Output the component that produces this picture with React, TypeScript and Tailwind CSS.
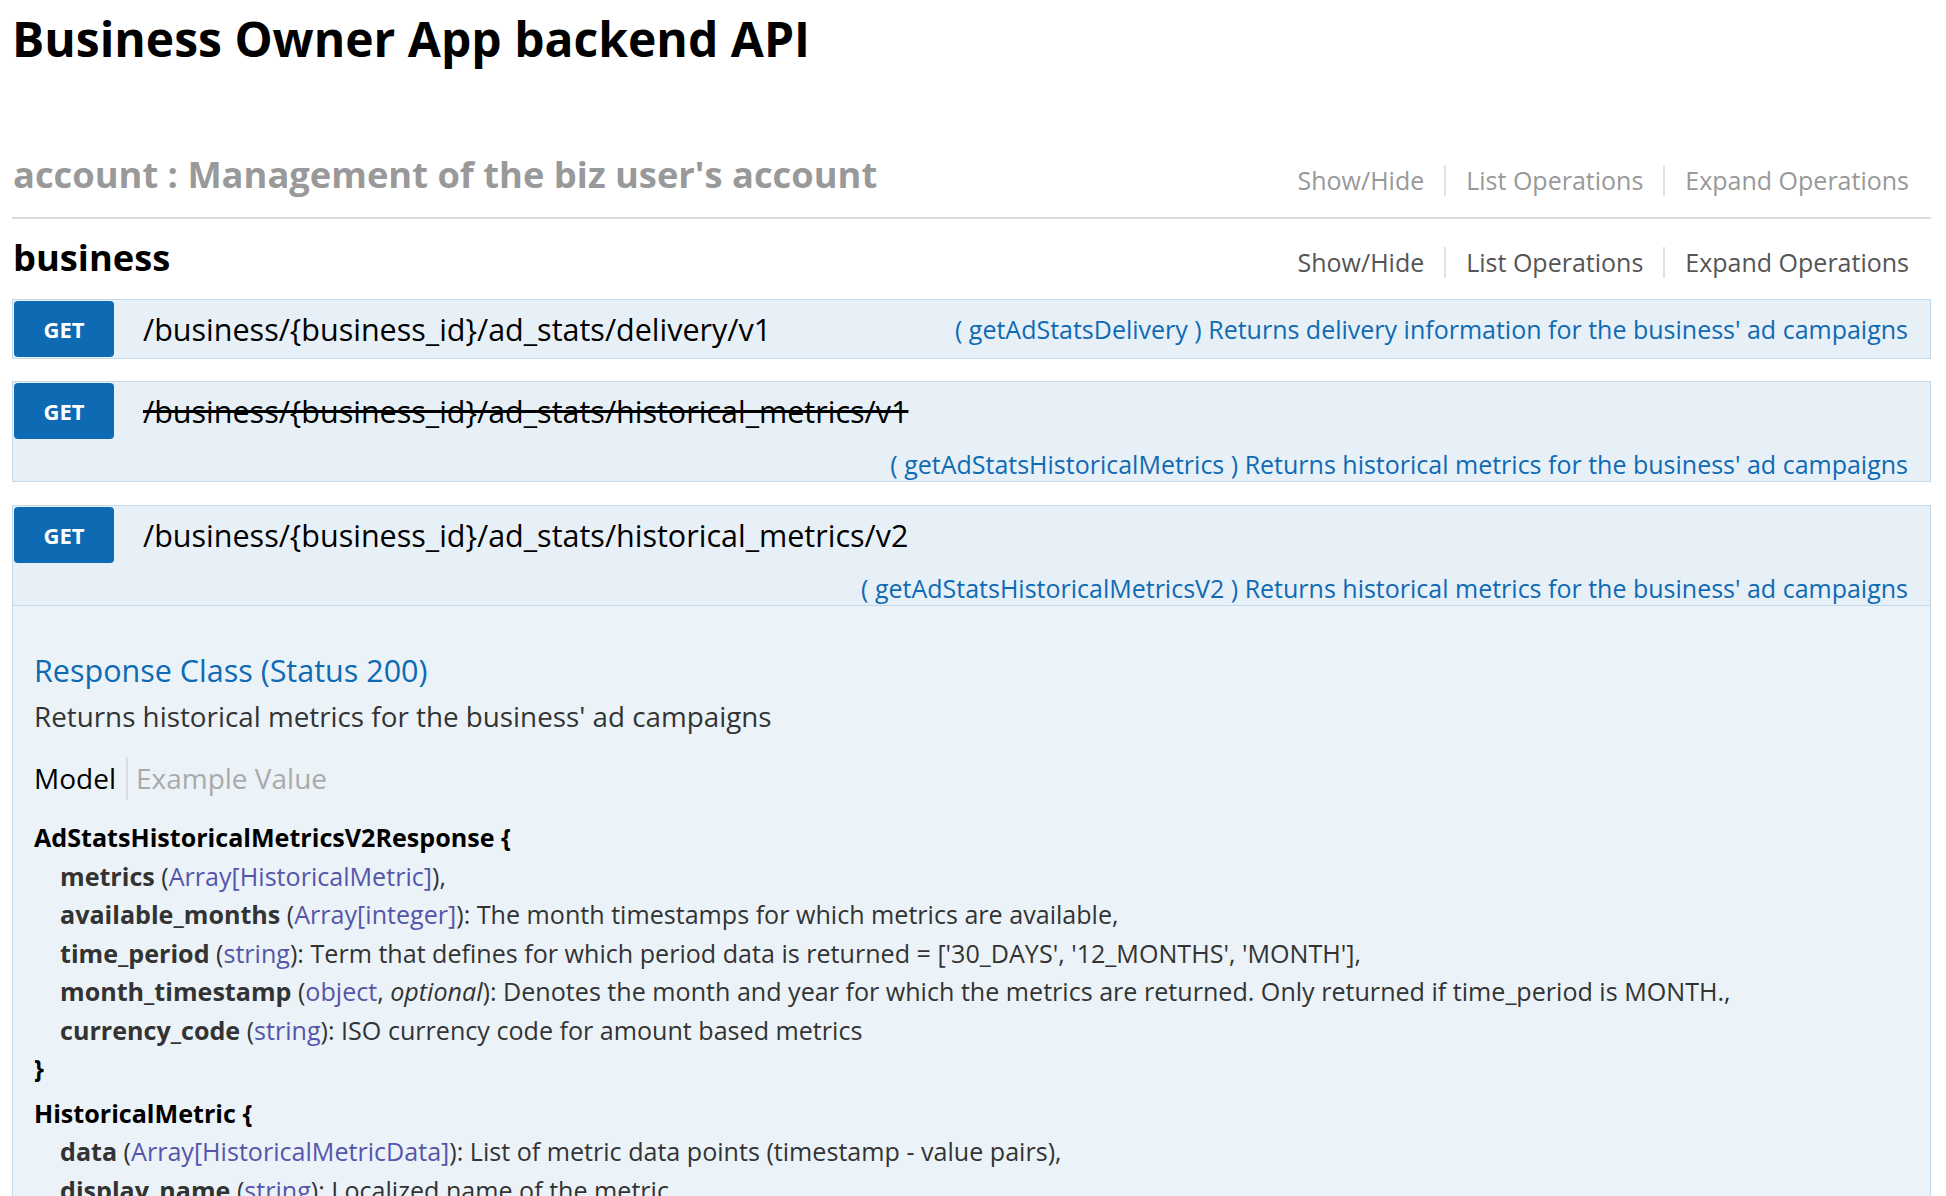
import React from "react";

const Links = ({ color }: { color: string }) => (
  <ul className={`flex items-center text-[25px] ${color}`}>
    <li className="px-[20px] leading-[31px]">Show/Hide</li>
    <li className="px-[20px] leading-[31px] border-l-2 border-[#e2e2e2]">List Operations</li>
    <li className="pl-[20px] leading-[31px] border-l-2 border-[#e2e2e2]">Expand Operations</li>
  </ul>
);

const Badge = () => (
  <div className="w-[100px] h-[56px] rounded-[4px] bg-[#0f6ab4] text-white font-bold text-[22px] flex items-center justify-center">
    GET
  </div>
);

const T = ({ children }: { children: React.ReactNode }) => (
  <span className="text-[#55a]">{children}</span>
);
const P = ({ children }: { children: React.ReactNode }) => (
  <span className="font-bold text-[#333]">{children}</span>
);

export default function App() {
  return (
    <div className="h-[1196px] overflow-hidden bg-white font-['Open_Sans',sans-serif] text-black">
      <div className="pl-[12px] pr-[15px]">
        <h1 className="pt-[7px] text-[48px] leading-[64px] font-bold">Business Owner App backend API</h1>

        {/* account resource */}
        <div className="mt-[78px] flex justify-between items-start pb-[18px] border-b-2 border-[#ddd]">
          <h2 className="pl-[1px] text-[36.3px] leading-[50px] font-bold text-[#999]">
            account : Management of the biz user's account
          </h2>
          <div className="mt-[16px] pr-[22px]">
            <Links color="text-[#999]" />
          </div>
        </div>

        {/* business resource */}
        <div className="mt-[13px] flex justify-between items-start">
          <h2 className="pl-[1px] text-[36.3px] leading-[50px] font-bold">business</h2>
          <div className="mt-[15px] pr-[22px]">
            <Links color="text-[#555]" />
          </div>
        </div>

        {/* op 1 */}
        <div className="mt-[17px] border border-[#c3d9ec] bg-[#e7f0f7]">
          <div className="flex items-center p-[1px] pr-[22px]">
            <Badge />
            <div className="ml-[29px] text-[30.5px] leading-[40px]">/business/&#123;business_id&#125;/ad_stats/delivery/v1</div>
            <div className="ml-auto text-[25px] leading-[40px] text-[#0f6ab4]">
              ( getAdStatsDelivery ) Returns delivery information for the business' ad campaigns
            </div>
          </div>
        </div>

        {/* op 2 */}
        <div className="mt-[22px] border border-[#c3d9ec] bg-[#e7f0f7]">
          <div className="flex items-center p-[1px]">
            <Badge />
            <div className="ml-[29px] text-[30.5px] leading-[40px] line-through">
              /business/&#123;business_id&#125;/ad_stats/historical_metrics/v1
            </div>
          </div>
          <div className="pt-[7px] pr-[22px] text-right text-[25px] leading-[34px] text-[#0f6ab4]">
            ( getAdStatsHistoricalMetrics ) Returns historical metrics for the business' ad campaigns
          </div>
        </div>

        {/* op 3 */}
        <div className="mt-[23px] border border-[#c3d9ec] bg-[#ebf3f9]">
          <div className="bg-[#e7f0f7] border-b border-[#c3d9ec]">
            <div className="flex items-center p-[1px]">
              <Badge />
              <div className="ml-[29px] text-[30.5px] leading-[40px]">
                /business/&#123;business_id&#125;/ad_stats/historical_metrics/v2
              </div>
            </div>
            <div className="pt-[7px] pr-[22px] text-right text-[25px] leading-[34px] text-[#0f6ab4]">
              ( getAdStatsHistoricalMetricsV2 ) Returns historical metrics for the business' ad campaigns
            </div>
          </div>

          <div className="pl-[21px] pr-[22px] pt-[44px] pb-[40px]">
            <h4 className="text-[30.5px] leading-[40px] text-[#0f6ab4]">Response Class (Status 200)</h4>
            <p className="mt-[7px] text-[27.8px] leading-[38px] text-[#333]">
              Returns historical metrics for the business' ad campaigns
            </p>
            <div className="mt-[22px] flex items-center text-[28px] leading-[43px]">
              <span className="pr-[10px] text-black">Model</span>
              <span className="pl-[8px] border-l-2 border-[#ddd] text-[#aaa]">Example Value</span>
            </div>

            <div className="mt-[18px] text-[25.1px] leading-[38.5px] text-[#333]">
              <div className="font-bold text-black">AdStatsHistoricalMetricsV2Response &#123;</div>
              <div className="pl-[26px]">
                <div><P>metrics</P> (<T>Array[HistoricalMetric]</T>),</div>
                <div><P>available_months</P> (<T>Array[integer]</T>): The month timestamps for which metrics are available,</div>
                <div><P>time_period</P> (<T>string</T>): Term that defines for which period data is returned = ['30_DAYS', '12_MONTHS', 'MONTH'],</div>
                <div><P>month_timestamp</P> (<T>object</T>, <i>optional</i>): Denotes the month and year for which the metrics are returned. Only returned if time_period is MONTH.,</div>
                <div><P>currency_code</P> (<T>string</T>): ISO currency code for amount based metrics</div>
              </div>
              <div className="font-bold text-black">&#125;</div>

              <div className="mt-[6px] font-bold text-black">HistoricalMetric &#123;</div>
              <div className="pl-[26px]">
                <div><P>data</P> (<T>Array[HistoricalMetricData]</T>): List of metric data points (timestamp - value pairs),</div>
                <div><P>display_name</P> (<T>string</T>): Localized name of the metric,</div>
                <div><P>name</P> (<T>string</T>): Name of the metric</div>
              </div>
              <div className="font-bold text-black">&#125;</div>
            </div>
          </div>
        </div>
      </div>
    </div>
  );
}
